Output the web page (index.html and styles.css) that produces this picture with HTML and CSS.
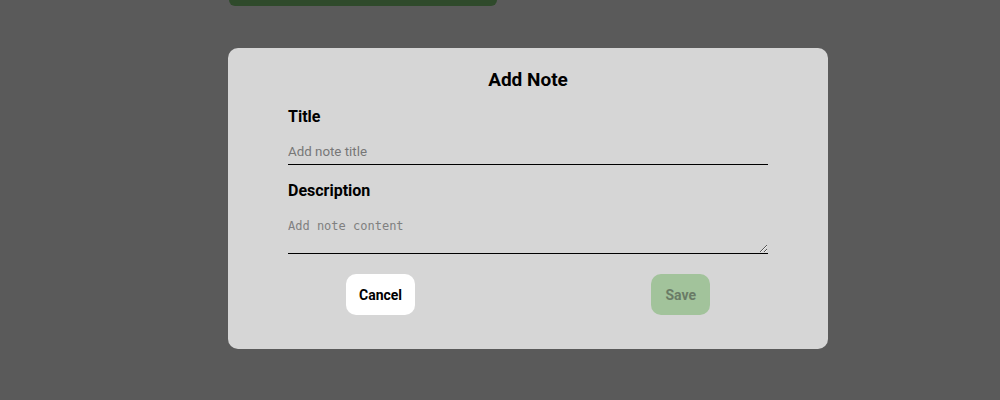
FILE: index.html
```html
<!DOCTYPE html>
<html lang="en">
<head>
<meta charset="utf-8">
<title>Add Note</title>
<link rel="stylesheet" href="styles.css">
</head>
<body>
<div class="page">
  <div class="topbar"></div>
  <div class="modal">
    <h2 class="modal-title">Add Note</h2>
    <label class="field-label" for="title">Title</label>
    <input class="field-input" id="title" type="text" placeholder="Add note title">
    <label class="field-label label-desc" for="desc">Description</label>
    <textarea class="field-textarea" id="desc" placeholder="Add note content"></textarea>
    <div class="actions">
      <button class="btn btn-cancel" type="button">Cancel</button>
      <button class="btn btn-save" type="button" disabled>Save</button>
    </div>
  </div>
</div>
</body>
</html>
```

FILE: styles.css
```css
html, body {
  margin: 0;
  padding: 0;
  background: #5a5a5a;
  font-family: Roboto, "Liberation Sans", sans-serif;
}
.page {
  height: 400px;
  overflow: hidden;
}
.topbar {
  margin-left: 229px;
  width: 268px;
  height: 6px;
  background: #2f4a2b;
  border-radius: 0 0 10px 10px;
}
.modal {
  margin: 42px 0 0 228px;
  width: 600px;
  box-sizing: border-box;
  padding: 21px 60px 34px;
  background: #d6d6d6;
  border-radius: 10px;
  display: flex;
  flex-direction: column;
}
.modal-title {
  margin: 0;
  font-size: 19px;
  line-height: 22px;
  font-weight: 700;
  text-align: center;
  color: #000;
}
.field-label {
  display: block;
  margin-top: 16px;
  font-size: 16px;
  line-height: 19px;
  font-weight: 700;
  color: #000;
}
.field-input {
  margin-top: 13px;
  display: block;
  box-sizing: border-box;
  width: 100%;
  height: 26px;
  padding: 4px 0 5px;
  border: none;
  border-bottom: 1px solid #000;
  background: transparent;
  font-family: Roboto, "Liberation Sans", sans-serif;
  font-size: 13.33px;
  line-height: 16px;
  color: #000;
  outline: none;
}
.field-input::placeholder {
  color: #777;
}
.field-textarea {
  margin-top: 13px;
  display: block;
  box-sizing: border-box;
  width: 100%;
  height: 41px;
  padding: 6px 0 4px;
  border: none;
  border-bottom: 1px solid #000;
  background: transparent;
  font-family: "DejaVu Sans Mono", "Liberation Mono", monospace;
  font-size: 12px;
  line-height: 15px;
  color: #000;
  outline: none;
}
.field-textarea::placeholder {
  color: #808080;
}
.actions {
  margin-top: 20px;
  padding: 0 58px;
  display: flex;
  justify-content: space-between;
}
.btn {
  height: 41px;
  padding: 0 13px;
  border: none;
  border-radius: 10px;
  font-family: Roboto, "Liberation Sans", sans-serif;
  font-size: 14px;
  font-weight: 700;
}
.btn-cancel {
  background: #fff;
  color: #000;
}
.btn-save {
  padding: 0 14px;
  background: #a2c39b;
  color: #6a7b66;
}
```
